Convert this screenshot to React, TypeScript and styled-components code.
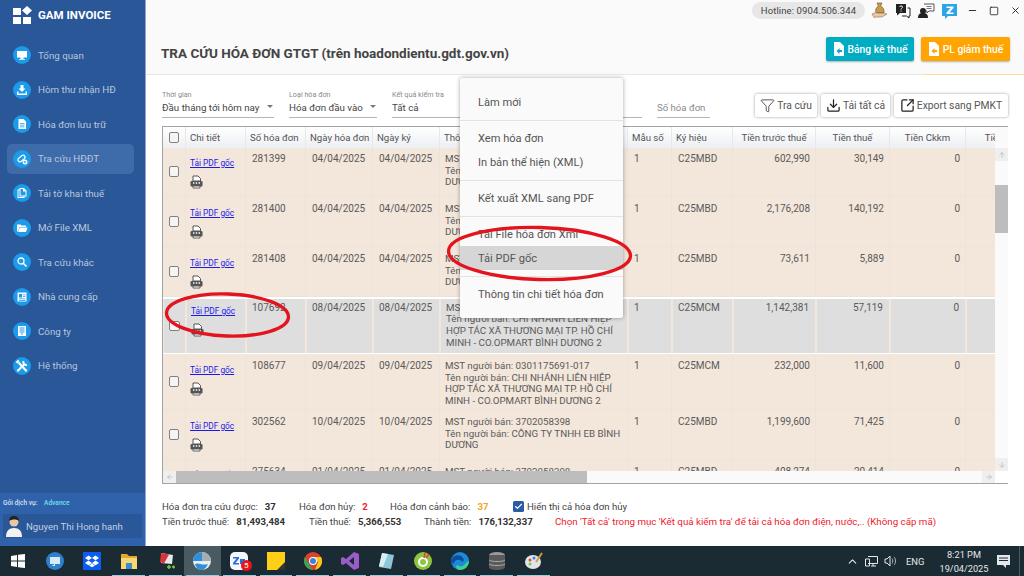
import React from 'react';
import styled, { createGlobalStyle } from 'styled-components';
import { Funnel, Download, SquareArrowOutUpRight, Minus, Square, X, ArrowUp, ArrowDown, ArrowLeft, ArrowRight, ChevronUp, Check } from 'lucide-react';

const GlobalStyle = createGlobalStyle`
	html, body {
		margin: 0;
		padding: 0;
		width: 1024px;
		height: 576px;
		overflow: hidden;
		background: #fff;
		font-family: Roboto, 'Noto Sans', sans-serif;
		color: #555;
	}
	* {
		box-sizing: border-box;
	}
`;

const Screen = styled.div`
	position: relative;
	width: 1024px;
	height: 576px;
	display: flex;
	flex-direction: column;
	overflow: hidden;
`;
const Window = styled.div`
	height: 546px;
	display: flex;
`;

/* sidebar */
const Sidebar = styled.aside`
	width: 146px;
	flex: none;
	display: flex;
	flex-direction: column;
	background: #2a5798;
	border-right: 1px solid #8fa9cf;
`;
const Brand = styled.div`
	height: 31px;
	padding: 6px 0 0 13px;
	display: flex;
	gap: 6px;
	color: #fff;
	font-size: 11.5px;
	font-weight: 700;
	line-height: 18px;
`;
const Nav = styled.nav`
	flex: 1;
	padding: 9px 0 0 7px;
	display: flex;
	flex-direction: column;
	gap: 4.55px;
`;
const NavItem = styled.div<{ $active?: boolean }>`
	width: 127px;
	height: 30px;
	padding-left: 6px;
	display: flex;
	align-items: center;
	gap: 7px;
	border-radius: 5px;
	font-size: 9.75px;
	color: #b9c8de;
	background: ${p => (p.$active ? '#3e6cab' : 'transparent')};
`;
const NavBadge = styled.span`
	width: 18px;
	height: 18px;
	flex: none;
	border-radius: 50%;
	background: #1b9bea;
	display: flex;
	align-items: center;
	justify-content: center;
`;
const Plan = styled.div`
	height: 53px;
	padding: 6px 3px 0;
	background: #2f62ab;
	color: #d4e0f0;
	font-size: 6.6px;
	font-weight: 500;
`;
const PlanName = styled.span`
	margin-left: 5px;
	color: #6ee0ec;
`;
const UserBox = styled.div`
	height: 24px;
	margin-top: 7px;
	display: flex;
	align-items: center;
	gap: 3px;
	padding-left: 2px;
	background: #2a5798;
	color: #c3d0e4;
	font-size: 9.6px;
	font-weight: 400;
`;

/* main */
const Main = styled.main`
	flex: 1;
	min-width: 0;
	display: flex;
	flex-direction: column;
`;
const Head = styled.header`
	height: 75px;
	flex: none;
	background: #fafafa;
	border-bottom: 1px solid #e8e8e8;
	border-image: linear-gradient(to right, #e8e8e8 775px, #ffdc96 775px) 1;
	display: flex;
	flex-direction: column;
`;
const TopBar = styled.div`
	height: 22px;
	padding: 2px 0 0 606px;
	display: flex;
	align-items: flex-start;
`;
const Hotline = styled.div`
	width: 113px;
	height: 17px;
	border-radius: 9px;
	background: #e7e7e7;
	color: #444;
	font-size: 9.5px;
	line-height: 17px;
	text-align: center;
	letter-spacing: 0.1px;
`;
const TopIcons = styled.div`
	margin-left: 6px;
	display: flex;
	gap: 7px;
	height: 17px;
	align-items: center;
`;
const WindowControls = styled.div`
	margin-left: 10px;
	display: flex;
	gap: 11px;
	height: 17px;
	align-items: center;
	color: #222;
`;
const TitleRow = styled.div`
	flex: 1;
	padding: 15px 14px 0 15px;
	display: flex;
	justify-content: space-between;
	align-items: flex-start;
`;
const Title = styled.h1`
	margin: 8px 0 0;
	font-size: 13.5px;
	font-weight: 700;
	color: #444;
	line-height: 17px;
`;
const HeadButtons = styled.div`
	display: flex;
	gap: 7px;
`;
const HeadButton = styled.div<{ $bg: string; $w: number }>`
	width: ${p => p.$w}px;
	height: 24px;
	border-radius: 2px;
	background: ${p => p.$bg};
	color: #fff;
	font-size: 10.3px;
	font-weight: 500;
	display: flex;
	align-items: center;
	justify-content: center;
	gap: 4px;
	box-shadow: 0 1px 2px rgba(0, 0, 0, 0.3);
`;

/* filter row */
const Filters = styled.div`
	height: 51px;
	flex: none;
	padding: 15px 16px 0 16px;
	display: flex;
	align-items: flex-start;
`;
const FilterField = styled.div<{ $w: number; $gap: number }>`
	width: ${p => p.$w}px;
	margin-right: ${p => p.$gap}px;
	height: 28px;
	border-bottom: 1px solid #b5b5b5;
	position: relative;
`;
const FilterLabel = styled.div`
	font-size: 7.2px;
	line-height: 10px;
	color: #8a8a8a;
`;
const FilterValue = styled.div`
	font-size: 9.75px;
	line-height: 16px;
	color: #444;
	white-space: nowrap;
`;
const Caret = styled.span`
	position: absolute;
	right: 1px;
	top: 15px;
	border: 3px solid transparent;
	border-top: 3.5px solid #777;
	border-bottom: 0;
`;
const SearchField = styled.div`
	width: 53px;
	height: 28px;
	padding-top: 10px;
	border-bottom: 1px solid #b5b5b5;
	font-size: 9.6px;
	line-height: 16px;
	color: #8a8a8a;
`;
const Actions = styled.div`
	margin-left: 45px;
	padding-top: 4px;
	display: flex;
	gap: 4px;
`;
const ActionButton = styled.div<{ $w: number }>`
	width: ${p => p.$w}px;
	height: 23px;
	background: #fff;
	border-radius: 2px;
	box-shadow: 0 0 3px rgba(0, 0, 0, 0.4);
	font-size: 10.3px;
	color: #555;
	display: flex;
	align-items: center;
	justify-content: center;
	gap: 2px;
	white-space: nowrap;
`;

/* table */
const TableFrame = styled.div`
	width: 846px;
	height: 358px;
	margin-left: 16px;
	flex: none;
	border: 1px solid #a3a3a3;
	display: grid;
	grid-template-columns: 832px 13px;
	grid-template-rows: 344px 12px;
	background: #fafafa;
`;
const Viewport = styled.div`
	overflow: hidden;
	background: #fff;
`;
const COLS = '23px 60px 60px 67px 67px 188px 44px 61px 83px 74px 76px 105px';
const HeaderRow = styled.div`
	position: relative;
	z-index: 1;
	width: 948px;
	height: 21px;
	display: grid;
	grid-template-columns: ${COLS};
	background: linear-gradient(#fff, #eceff3);
`;
const HeaderCell = styled.div<{ $right?: boolean }>`
	padding: 0 ${p => (p.$right ? '7px' : '4px')};
	border-right: 1px solid #e6e8ea;
	font-size: 9.65px;
	line-height: 22px;
	color: #555;
	white-space: nowrap;
	overflow: hidden;
	text-align: ${p => (p.$right ? 'center' : 'left')};
`;
const Body = styled.div`
	margin-top: -1px;
`;
const Row = styled.div<{ $h: number }>`
	width: 948px;
	height: ${p => p.$h}px;
	display: grid;
	grid-template-columns: ${COLS};
	overflow: hidden;
`;
const Cell = styled.div<{ $sel?: boolean; $right?: boolean }>`
	background: ${p => (p.$sel ? '#dedede' : '#f3e6da')};
	border-right: 1px solid ${p => (p.$sel ? '#f3e6da' : '#ebe3dc')};
	border-bottom: 1px solid #ebe3dc;
	${p => p.$sel && 'margin: 2px 0 1px; border-left: 1px solid #f3e6da; border-bottom: 0;'}
	padding: ${p => (p.$sel ? '3px 6px 0 5px' : '6px 5px 0 6px')};
	font-size: 10px;
	line-height: 11.7px;
	color: #5a5a5a;
	text-align: ${p => (p.$right ? 'right' : 'left')};
`;
const SellerCell = styled(Cell)`
	padding-left: 5px;
	padding-right: 0;
	font-size: 9.75px;
	white-space: nowrap;
`;
const CheckCell = styled(Cell)`
	padding: 0;
	display: flex;
	align-items: center;
	justify-content: center;
`;
const Box = styled.span`
	width: 10.5px;
	height: 10.5px;
	border: 1.5px solid #808080;
	border-radius: 2px;
	background: #f5f5f5;
`;
const HeaderBox = styled(HeaderCell)`
	padding: 0;
	display: flex;
	align-items: center;
	justify-content: center;
`;
const DetailCell = styled(Cell)`
	padding-left: 4px;
	padding-top: ${p => (p.$sel ? '7.5px' : '10.5px')};
`;
const PdfLink = styled.a`
	display: block;
	color: #1a1aee;
	font-size: 8.3px;
	line-height: 11px;
	text-decoration: underline;
`;
const PrintWrap = styled.div`
	margin-top: 6px;
	line-height: 0;
`;
const VScroll = styled.div`
	padding-top: 21px;
	display: flex;
	flex-direction: column;
	background: #fafafa;
	color: #b5b5b5;
`;
const ScrollBtn = styled.div`
	height: 13px;
	flex: none;
	display: flex;
	align-items: center;
	justify-content: center;
	background: #efefef;
`;
const VThumb = styled.div`
	height: 48px;
	margin-top: 24px;
	background: #bdbdbd;
`;
const Spring = styled.div`
	flex: 1;
`;
const HScroll = styled.div`
	display: flex;
	background: #fafafa;
	color: #b5b5b5;
`;
const HThumb = styled.div`
	width: 411px;
	background: #bdbdbd;
`;
const HBtn = styled.div`
	width: 13px;
	flex: none;
	display: flex;
	align-items: center;
	justify-content: center;
	background: #efefef;
`;
const Corner = styled.div`
	background: #fff;
`;

/* totals */
const Totals = styled.div`
	padding: 16px 0 0 16px;
	display: flex;
	flex-direction: column;
	gap: 3px;
`;
const TotalRow = styled.div`
	display: flex;
	height: 12px;
	align-items: center;
	font-size: 9.6px;
	color: #444;
	white-space: nowrap;
`;
const Stat = styled.div<{ $w: number }>`
	width: ${p => p.$w}px;
	flex: none;
	display: flex;
	gap: 7px;
`;
const StatValue = styled.b<{ $c?: string }>`
	font-weight: 700;
	color: ${p => p.$c || '#333'};
`;
const Tick = styled.span`
	width: 11px;
	height: 11px;
	margin-right: 3px;
	border-radius: 1.5px;
	background: #2b5ba6;
	color: #fff;
	display: flex;
	align-items: center;
	justify-content: center;
`;
const Warning = styled.div`
	color: #f0202c;
	font-size: 9.75px;
`;

/* context menu, over the table */
const Menu = styled.div`
	position: absolute;
	left: 460px;
	top: 78px;
	width: 163px;
	height: 240px;
	padding: 12px 0;
	z-index: 3;
	background: #fafafa;
	border-radius: 2px;
	box-shadow: 0 0 4px rgba(0, 0, 0, 0.35);
`;
const MenuItem = styled.div<{ $on?: boolean }>`
	height: 24px;
	padding-left: 18px;
	font-size: 11.1px;
	line-height: 25px;
	color: #555;
	white-space: nowrap;
	background: ${p => (p.$on ? '#d6d6d6' : 'transparent')};
`;
const MenuLine = styled.div`
	height: 1px;
	margin: 6px 0 5px;
	background: #e3e3e3;
`;
const Marks = styled.svg`
	position: absolute;
	left: 0;
	top: 0;
	z-index: 4;
	pointer-events: none;
`;

/* windows taskbar */
const Taskbar = styled.footer`
	height: 30px;
	flex: none;
	display: flex;
	background: #1b2b33;
`;
const Slot = styled.div<{ $run?: boolean; $on?: boolean }>`
	position: relative;
	width: 36.8px;
	height: 30px;
	display: flex;
	align-items: center;
	justify-content: center;
	background: ${p => (p.$on ? '#4a5a61' : 'transparent')};
	&::after {
		content: '';
		display: ${p => (p.$run ? 'block' : 'none')};
		position: absolute;
		left: 2px;
		right: 2px;
		bottom: 0;
		height: 1px;
		background: #8fd0e8;
	}
`;
const Badge = styled.span`
	position: absolute;
	left: 20px;
	top: 14px;
	width: 11px;
	height: 11px;
	border-radius: 50%;
	background: #e8141c;
	color: #fff;
	font-size: 8px;
	line-height: 11px;
	text-align: center;
`;
const Tray = styled.div`
	margin-left: auto;
	width: 174px;
	display: flex;
	align-items: center;
	color: #e4e8ea;
	font-size: 9.4px;
	border-right: 1px solid #4a5a61;
	margin-right: 4px;
`;
const TrayIcons = styled.div`
	display: flex;
	align-items: center;
	gap: 6px;
`;
const Lang = styled.span`
	margin-left: 9px;
	width: 28px;
`;
const Clock = styled.div`
	width: 54px;
	margin-left: 3px;
	padding-top: 1px;
	font-size: 9.2px;
	line-height: 14px;
	text-align: center;
`;
const Notice = styled.div`
	margin-left: 6px;
	line-height: 0;
`;

const ico = (d: React.ReactNode, s = 12, box = 24) => (
	<svg width={s} height={s} viewBox={`0 0 ${box} ${box}`}>
		{d}
	</svg>
);

const navItems: [string, React.ReactNode][] = [
	['Tổng quan', ico(<path fill="#fff" d="M2 4h20v13H2zM9 17h6v3h3v1.5H6V20h3z" />)],
	['Hòm thư nhận HĐ', ico(<path fill="#fff" d="M9 2h6v7h4l-7 7-7-7h4zM2 15h3v4h14v-4h3v7H2z" />)],
	['Hóa đơn lưu trữ', ico(<path fill="#fff" fillRule="evenodd" d="M5 2h10l5 5v15H5zM8 10v1.5h9V10zm0 3.5V15h9v-1.5zM8 17v1.5h9V17z" />)],
	['Tra cứu HĐĐT', ico(<g><rect x="3" y="7" width="16" height="8" rx="4" transform="rotate(-40 11 11)" fill="none" stroke="#fff" strokeWidth="2.4" /><circle cx="18" cy="18" r="5" fill="#fff" /><path d="M18 15.5v5M15.5 18h5" stroke="#1b9bea" strokeWidth="1.6" /></g>)],
	['Tải tờ khai thuế', ico(<path fill="#fff" fillRule="evenodd" d="M3 5h4V2h9l5 5v12h-4v3H3zm6-1v13h10V9h-5V4zM5 7v13h10v-1H7V7z" />)],
	['Mở File XML', ico(<path fill="#fff" d="M2 5h7l2 2h9v3H7l-3 9H2zM7.5 11H23l-3 9H4.5z" />)],
	['Tra cứu khác', ico(<g><circle cx="10" cy="10" r="6" fill="none" stroke="#fff" strokeWidth="2.6" /><path d="M14.5 14.5L21 21" stroke="#fff" strokeWidth="3.4" /></g>)],
	['Nhà cung cấp', ico(<path fill="#fff" fillRule="evenodd" d="M3 3h18v18H3zm3 3v7h6V6zm8 1v1.5h5V7zm0 3v1.5h5V10zm-8 5v1.5h13V15zm0 3v1.5h13V18z" />)],
	['Công ty', ico(<path fill="#fff" fillRule="evenodd" d="M4 2h16v20H4zm3 3v2h10V5zm0 4v2h10V9zm0 4v2h10v-2zm3 4v2h4v-2z" />)],
	['Hệ thống', ico(<g fill="none" stroke="#fff"><path d="M6 6l14 15" strokeWidth="3.6" /><path d="M2.5 6.500L6.500 2.500" strokeWidth="3.6" /><path d="M4 21L16 9" strokeWidth="3.6" /><path d="M14.500 3.500a5 5 0 0 0 6 6.500" strokeWidth="3.4" /></g>, 14)],
];

const columns = ['Chi tiết', 'Số hóa đơn', 'Ngày hóa đơn', 'Ngày ký', 'Thông tin', 'Mẫu số', 'Ký hiệu'];
const moneyCols = ['Tiền trước thuế', 'Tiền thuế', 'Tiền Ckkm', 'Tiền thanh toán'];

const COOP = ['MST người bán: 0301175691-017', 'Tên người bán: CHI NHÁNH LIÊN HIỆP', 'HỢP TÁC XÃ THƯƠNG MẠI TP. HỒ CHÍ', 'MINH - CO.OPMART BÌNH DƯƠNG 2'];
const EB = ['MST người bán: 3702058398', 'Tên người bán: CÔNG TY TNHH EB BÌNH', 'DƯƠNG'];

interface Invoice {
	no: string;
	date: string;
	seller: string[];
	symbol: string;
	net: string;
	tax: string;
	h: number;
	selected?: boolean;
}

const invoices: Invoice[] = [
	{ no: '281399', date: '04/04/2025', seller: EB, symbol: 'C25MBD', net: '602,990', tax: '30,149', h: 50 },
	{ no: '281400', date: '04/04/2025', seller: EB, symbol: 'C25MBD', net: '2,176,208', tax: '140,192', h: 50 },
	{ no: '281408', date: '04/04/2025', seller: EB, symbol: 'C25MBD', net: '73,611', tax: '5,889', h: 49.5 },
	{ no: '107692', date: '08/04/2025', seller: COOP, symbol: 'C25MCM', net: '1,142,381', tax: '57,119', h: 57.5, selected: true },
	{ no: '108677', date: '09/04/2025', seller: COOP, symbol: 'C25MCM', net: '232,000', tax: '11,600', h: 56 },
	{ no: '302562', date: '10/04/2025', seller: EB, symbol: 'C25MBD', net: '1,199,600', tax: '71,425', h: 49.5 },
	{ no: '275634', date: '01/04/2025', seller: EB, symbol: 'C25MBD', net: '408,274', tax: '20,414', h: 50 },
];

const PrintPdf = () => (
	<svg width="13" height="14" viewBox="0 0 13 14">
		<path d="M3 1h5l2.5 2.5V6H3z" fill="#fff" stroke="#555" strokeWidth="1" />
		<rect x="0.5" y="6" width="12" height="5.5" rx="1.2" fill="#555" />
		<path d="M3 11h7v2H3z" fill="#fff" stroke="#555" strokeWidth="0.9" />
		<path d="M3 8h1.4M5.8 8h1.4M8.6 8H10" stroke="#fff" strokeWidth="1.3" />
	</svg>
);

const FileIcon = ({ fill }: { fill: string }) => (
	<svg width="11" height="14" viewBox="0 0 11 14">
		<path d="M1 0h6l4 4v10H1z" fill="#fff" />
		<path d="M3.5 9l3-3v2H9v2H6.5v2z" fill={fill} />
	</svg>
);

const TopIconSet = () => (
	<TopIcons>
		<svg width="17" height="17" viewBox="0 0 17 17">
			<path d="M6 1h5l-1.500 3c3 1.500 4 4 3.500 6.500H5C4 8 5 5.500 7.500 4z" fill="#c99a4a" stroke="#6b4c1e" strokeWidth="0.6" />
			<path d="M1 12l4-1.500 3 1 5-.5 3 1-5 3H5l-2 .5z" fill="#e9c7a4" stroke="#7a5a3a" strokeWidth="0.5" />
		</svg>
		<svg width="16" height="16" viewBox="0 0 16 16">
			<path d="M1 1h10v9H5l-3 2.500V10H1z" fill="#222" />
			<path d="M12.500 5H15v8h-1v2l-2.500-2H7" fill="none" stroke="#222" strokeWidth="1" />
			<path d="M4.500 4c.5-1.500 3-1.500 3 0 0 1.200-1.500 1.200-1.500 2.500M6 7.500v1" stroke="#fff" strokeWidth="1" fill="none" />
		</svg>
		<svg width="17" height="16" viewBox="0 0 17 16">
			<circle cx="5" cy="8" r="3" fill="#222" />
			<path d="M0 15c0-4 2-5 5-5s5 1 5 5z" fill="#222" />
			<path d="M6 1h10v7h-5l-2 2V8H8" fill="none" stroke="#555" strokeWidth="1" />
			<path d="M8.500 3.500h5M8.500 5.500h5" stroke="#555" strokeWidth="0.8" />
		</svg>
		<svg width="15" height="16" viewBox="0 0 15 16">
			<path d="M0 1h15v12H6l-3 3v-3H0z" fill="#2aa5e8" />
			<path d="M4.500 3.500h7v1.500L7.500 9.500h4V11h-7V9.500l4-4.500h-4z" fill="#fff" />
		</svg>
	</TopIcons>
);

const apps: { el: React.ReactNode; run?: boolean; on?: boolean; badge?: string }[] = [
	{ el: <svg width="14" height="14" viewBox="0 0 14 14"><path fill="#fff" d="M0 2l6-1v5.500H0zM7 .8L14 0v6.500H7zM0 7.500h6V13l-6-1zM7 7.500h7V14l-7-.8z" /></svg> },
	{ el: <svg width="18" height="18" viewBox="0 0 18 18"><circle cx="9" cy="9" r="9" fill="#2f7fcf" /><path fill="#d6ebfa" d="M4 5h10v7H9v2H6.500v-1H8v-1H4z" /></svg> },
	{ el: <svg width="18" height="18" viewBox="0 0 18 18"><rect width="18" height="18" fill="#0b5cf0" /><path fill="#fff" d="M5.500 3.500L9 6l-3.500 2.200L2 6zM12.500 3.500L16 6l-3.500 2.200L9 6zM5.500 8.500L9 11l-3.500 2.200L2 11zM12.500 8.500L16 11l-3.500 2.200L9 11zM9 11.500l3 2-3 1.800-3-1.800z" /></svg> },
	{ el: <svg width="18" height="18" viewBox="0 0 18 18"><path fill="#e0a92e" d="M1 2h6l2 2h8v13H1z" /><path fill="#f7d774" d="M1 6h16v11H1z" /><path fill="#3a8ed0" d="M6 11h6v6H6z" /></svg>, run: true },
	{ el: <svg width="18" height="18" viewBox="0 0 18 18"><path fill="#e8e8e8" d="M4 1l12 2-1 9-11-1z" /><path fill="#d8353a" d="M4 1l8 1.500-5 9L3 10z" /><path stroke="#7ac943" strokeWidth="1.500" d="M10 15h4M12 13v4M15 15h3M16.500 13.500v3" /></svg>, run: true },
	{ el: <svg width="18" height="18" viewBox="0 0 18 18"><circle cx="9" cy="9" r="9" fill="#e8eef2" /><path fill="#2f8fd8" d="M0 9a9 9 0 0 1 9-9v9z" /><path fill="#a3aeb3" d="M9 0a9 9 0 0 1 9 9H9z" /><path fill="#2f8fd8" d="M2 12c4-2 6 2 13 0-2 4-4 6-6 6-3 0-6-2-7-6z" /></svg>, run: true, on: true },
	{ el: <svg width="18" height="18" viewBox="0 0 18 18"><rect width="18" height="18" rx="5" fill="#f4f7fb" /><path fill="#2a6fe0" d="M3 5h6v1.500L5.500 11H9v1.500H3V11l3.500-4.500H3zM10 7h5v5h-5z" /></svg>, run: true, badge: '5' },
	{ el: <svg width="18" height="18" viewBox="0 0 18 18"><rect width="18" height="18" fill="#fdd017" /><path fill="#333" d="M18 10v8h-8z" /></svg>, run: true },
	{ el: <svg width="18" height="18" viewBox="0 0 18 18"><circle cx="9" cy="9" r="9" fill="#d9432f" /><path fill="#3aa655" d="M1 5l5 9 3 4a9 9 0 0 1-8-13z" /><path fill="#f8c71c" d="M9 5h8a9 9 0 0 1-6 13l3-8z" /><circle cx="9" cy="9" r="4" fill="#fff" /><circle cx="9" cy="9" r="3" fill="#3a82e0" /></svg>, run: true },
	{ el: <svg width="18" height="18" viewBox="0 0 18 18"><path fill="#9a5cc9" d="M13 0l5 2v14l-5 2-8-7-3 2-2-1V6l2-1 3 2zM13 5L8 9l5 4z" /></svg>, run: true },
	{ el: <svg width="18" height="18" viewBox="0 0 18 18"><path fill="#8cc8d8" d="M5 1l12 2-3 14-12-2z" /><path fill="#d7eef4" d="M5 1l6 1-5 13-4-1z" /></svg>, run: true },
	{ el: <svg width="18" height="18" viewBox="0 0 18 18"><circle cx="9" cy="9" r="9" fill="#8cc63f" /><circle cx="9" cy="10" r="4" fill="none" stroke="#fff" strokeWidth="2" /><path d="M11 1l-1 5M15 2l-3 4" stroke="#e8432f" strokeWidth="1.500" /></svg>, run: true },
	{ el: <svg width="18" height="18" viewBox="0 0 18 18"><circle cx="9" cy="9" r="9" fill="#1c8ad6" /><path fill="#3fd08f" d="M18 9c0 5-4 9-9 9-3 0-5-3-3-5 3 2 6 2 8-1 1-1 2-3 4-3z" /><path fill="#0d4f9c" d="M0 9c1-5 6-7 10-5 3 2 4 5 1 6-1-3-7-3-8 1-.5 1-2 1-3-2z" /></svg>, run: true },
	{ el: <svg width="16" height="18" viewBox="0 0 16 18"><ellipse cx="8" cy="3" rx="8" ry="3" fill="#9a9a9a" /><path fill="#5a5a5a" d="M0 3h16v12c0 2-3 3-8 3s-8-1-8-3z" /><path stroke="#aaa" fill="none" d="M0 8c2 2 14 2 16 0M0 12c2 2 14 2 16 0" /></svg>, run: true },
	{ el: <svg width="18" height="18" viewBox="0 0 18 18"><ellipse cx="8" cy="10" rx="8" ry="7" fill="#dfe6ea" /><circle cx="5" cy="8" r="1.500" fill="#e8432f" /><circle cx="9" cy="6" r="1.500" fill="#3a82e0" /><circle cx="5" cy="12" r="1.500" fill="#7ac943" /><path d="M11 10l6-9" stroke="#d99a3a" strokeWidth="2" /></svg>, run: true },
];

export default function App() {
	return (
		<Screen>
			<GlobalStyle />
			<Window>
				<Sidebar>
					<Brand>
						<svg width="19" height="18" viewBox="0 0 19 18">
							<path fill="#fff" d="M0 2h8v7H0zM0 11h8v7H0zM10 11h8v7h-8zM14 0l5 4.500-5 4.500-5-4.500z" />
						</svg>
						GAM INVOICE
					</Brand>
					<Nav>
						{navItems.map(([label, icon], i) => (
							<NavItem key={label} $active={i === 3}>
								<NavBadge>{icon}</NavBadge>
								{label}
							</NavItem>
						))}
					</Nav>
					<Plan>
						Gói dịch vụ: <PlanName>Advance</PlanName>
						<UserBox>
							<svg width="18" height="22" viewBox="0 0 18 22">
								<circle cx="9" cy="7" r="4.500" fill="#e9c7a4" />
								<path d="M4 6c0-4 3-5 5-5s5 1 5 5c-2-2-7-2-10 0z" fill="#222" />
								<path d="M1 22c0-6 3-9 8-9s8 3 8 9z" fill="#f2f2f2" />
							</svg>
							Nguyen Thi Hong hanh
						</UserBox>
					</Plan>
				</Sidebar>
				<Main>
					<Head>
						<TopBar>
							<Hotline>Hotline: 0904.506.344</Hotline>
							<TopIconSet />
							<WindowControls>
								<Minus size={11} strokeWidth={2} />
								<Square size={10} strokeWidth={2} />
								<X size={11} strokeWidth={2} />
							</WindowControls>
						</TopBar>
						<TitleRow>
							<Title>TRA CỨU HÓA ĐƠN GTGT (trên hoadondientu.gdt.gov.vn)</Title>
							<HeadButtons>
								<HeadButton $bg="#00acc1" $w={88}>
									<FileIcon fill="#00acc1" /> Bảng kê thuế
								</HeadButton>
								<HeadButton $bg="#ffa400" $w={89}>
									<FileIcon fill="#ffa400" /> PL giảm thuế
								</HeadButton>
							</HeadButtons>
						</TitleRow>
					</Head>
					<Filters>
						<FilterField $w={112} $gap={15}>
							<FilterLabel>Thời gian</FilterLabel>
							<FilterValue>Đầu tháng tới hôm nay</FilterValue>
							<Caret />
						</FilterField>
						<FilterField $w={88} $gap={15}>
							<FilterLabel>Loại hóa đơn</FilterLabel>
							<FilterValue>Hóa đơn đầu vào</FilterValue>
							<Caret />
						</FilterField>
						<FilterField $w={250} $gap={15}>
							<FilterLabel>Kết quả kiểm tra</FilterLabel>
							<FilterValue>Tất cả</FilterValue>
						</FilterField>
						<SearchField>Số hóa đơn</SearchField>
						<Actions>
							<ActionButton $w={62}>
								<Funnel size={15} strokeWidth={1.3} color="#333" /> Tra cứu
							</ActionButton>
							<ActionButton $w={69}>
								<Download size={15} strokeWidth={2} color="#222" /> Tải tất cả
							</ActionButton>
							<ActionButton $w={114}>
								<SquareArrowOutUpRight size={15} strokeWidth={2} color="#222" /> Export sang PMKT
							</ActionButton>
						</Actions>
					</Filters>
					<TableFrame>
						<Viewport>
							<HeaderRow>
								<HeaderBox>
									<Box />
								</HeaderBox>
								{columns.map(c => (
									<HeaderCell key={c}>{c}</HeaderCell>
								))}
								{moneyCols.map(c => (
									<HeaderCell key={c} $right>
										{c}
									</HeaderCell>
								))}
							</HeaderRow>
							<Body>
								{invoices.map(inv => (
									<Row key={inv.no} $h={inv.h}>
										<CheckCell $sel={inv.selected}>
											<Box />
										</CheckCell>
										<DetailCell $sel={inv.selected}>
											<PdfLink>Tải PDF gốc</PdfLink>
											<PrintWrap>
												<PrintPdf />
											</PrintWrap>
										</DetailCell>
										<Cell $sel={inv.selected}>{inv.no}</Cell>
										<Cell $sel={inv.selected}>{inv.date}</Cell>
										<Cell $sel={inv.selected}>{inv.date}</Cell>
										<SellerCell $sel={inv.selected}>
											{inv.seller.map(l => (
												<div key={l}>{l}</div>
											))}
										</SellerCell>
										<Cell $sel={inv.selected}>1</Cell>
										<Cell $sel={inv.selected}>{inv.symbol}</Cell>
										<Cell $sel={inv.selected} $right>
											{inv.net}
										</Cell>
										<Cell $sel={inv.selected} $right>
											{inv.tax}
										</Cell>
										<Cell $sel={inv.selected} $right>
											0
										</Cell>
										<Cell $sel={inv.selected} />
									</Row>
								))}
							</Body>
						</Viewport>
						<VScroll>
							<ScrollBtn>
								<ArrowUp size={8} />
							</ScrollBtn>
							<VThumb />
							<Spring />
							<ScrollBtn>
								<ArrowDown size={8} />
							</ScrollBtn>
						</VScroll>
						<HScroll>
							<HBtn>
								<ArrowLeft size={8} />
							</HBtn>
							<HThumb />
							<Spring />
							<HBtn>
								<ArrowRight size={8} />
							</HBtn>
						</HScroll>
						<Corner />
					</TableFrame>
					<Totals>
						<TotalRow>
							<Stat $w={137}>
								Hóa đơn tra cứu được: <StatValue>37</StatValue>
							</Stat>
							<Stat $w={91}>
								Hóa đơn hủy: <StatValue $c="#f0202c">2</StatValue>
							</Stat>
							<Stat $w={123}>
								Hóa đơn cảnh báo: <StatValue $c="#f5a623">37</StatValue>
							</Stat>
							<Tick>
								<Check size={9} strokeWidth={3} />
							</Tick>
							Hiển thị cả hóa đơn hủy
						</TotalRow>
						<TotalRow>
							<Stat $w={147}>
								Tiền trước thuế: <StatValue>81,493,484</StatValue>
							</Stat>
							<Stat $w={115}>
								Tiền thuế: <StatValue>5,366,553</StatValue>
							</Stat>
							<Stat $w={131}>
								Thành tiền: <StatValue>176,132,337</StatValue>
							</Stat>
							<Warning>Chọn 'Tất cả' trong mục 'Kết quả kiểm tra' để tải cả hóa đơn điện, nước,.. (Không cấp mã)</Warning>
						</TotalRow>
					</Totals>
				</Main>
			</Window>
			<Taskbar>
				{apps.map((a, i) => (
					<Slot key={i} $run={a.run} $on={a.on}>
						{a.el}
						{a.badge && <Badge>{a.badge}</Badge>}
					</Slot>
				))}
				<Tray>
					<TrayIcons>
						<ChevronUp size={13} />
						<svg width="13" height="12" viewBox="0 0 13 12">
							<path d="M3 1.500h9.500v7H3M0.500 4h4v7h-4zM6 11h5M8 8.500V11" fill="none" stroke="#e4e8ea" strokeWidth="1" />
						</svg>
						<svg width="13" height="12" viewBox="0 0 13 12">
							<path d="M1 4h2l3-3v10L3 8H1z" fill="none" stroke="#e4e8ea" strokeWidth="1" />
							<path d="M8 3.500c1 1.500 1 3.500 0 5M10 2c2 2 2 6 0 8" fill="none" stroke="#a9b3b8" strokeWidth="1" />
						</svg>
					</TrayIcons>
					<Lang>ENG</Lang>
					<Clock>
						8:21 PM
						<br />
						19/04/2025
					</Clock>
					<Notice>
						<svg width="13" height="13" viewBox="0 0 13 13">
							<path d="M0 0h13v10H9v3l-3-3H0z" fill="#e4e8ea" />
							<path d="M2 3h9M2 5.500h9" stroke="#1b2b33" strokeWidth="1" />
						</svg>
					</Notice>
				</Tray>
			</Taskbar>
			<Menu>
				<MenuItem>Làm mới</MenuItem>
				<MenuLine />
				<MenuItem>Xem hóa đơn</MenuItem>
				<MenuItem>In bản thể hiện (XML)</MenuItem>
				<MenuLine />
				<MenuItem>Kết xuất XML sang PDF</MenuItem>
				<MenuLine />
				<MenuItem>Tải File hóa đơn Xml</MenuItem>
				<MenuItem $on>Tải PDF gốc</MenuItem>
				<MenuLine />
				<MenuItem>Thông tin chi tiết hóa đơn</MenuItem>
			</Menu>
			<Marks width="1024" height="576" viewBox="0 0 1024 576">
				<ellipse cx="227.500" cy="315" rx="61" ry="21" transform="rotate(2 227.500 315)" fill="none" stroke="#e4141e" strokeWidth="3.3" />
				<ellipse cx="539.500" cy="253.500" rx="91" ry="26" transform="rotate(1.500 539.500 253.500)" fill="none" stroke="#e4141e" strokeWidth="3.3" />
			</Marks>
		</Screen>
	);
}
